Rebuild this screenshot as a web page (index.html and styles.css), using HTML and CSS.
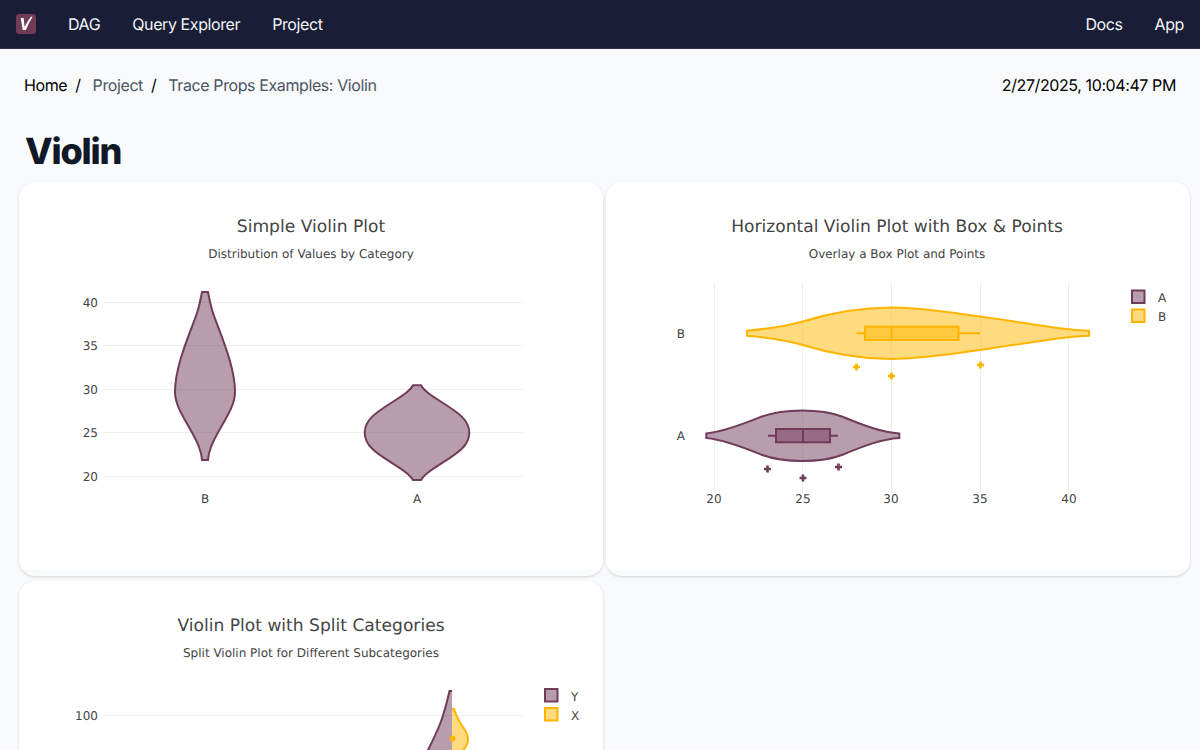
FILE: index.html
```html
<!DOCTYPE html>
<html lang="en">
<head>
<meta charset="utf-8">
<title>Violin</title>
<link rel="stylesheet" href="styles.css">
</head>
<body>
<nav class="nav">
  <svg class="logo" viewBox="0 0 20 20" width="20" height="20" aria-label="Logo"><rect width="20" height="20" rx="3" class="logo-bg"/><path d="M4.7 4H7.6L8.6 13Q11.5 7 14.9 2.7H16.6Q12.5 9 9.8 16H6.8Z" class="logo-v"/></svg>
  <div class="nav-links">
    <a class="nav-link">DAG</a>
    <a class="nav-link">Query Explorer</a>
    <a class="nav-link">Project</a>
  </div>
  <div class="nav-links nav-right">
    <a class="nav-link">Docs</a>
    <a class="nav-link">App</a>
  </div>
</nav>
<main class="main">
  <div class="crumbs">
    <div class="crumb-list">
      <span class="crumb-home">Home</span><span class="sep">/</span>
      <span class="crumb">Project</span><span class="sep">/</span>
      <span class="crumb">Trace Props Examples: Violin</span>
    </div>
    <time class="stamp">2/27/2025, 10:04:47 PM</time>
  </div>
  <h1 class="title">Violin</h1>
  <div class="grid">
    <section class="card">
      <svg class="plot" viewBox="19 182 584 388" width="584" height="388">
        <text x="311" y="232" class="ptitle">Simple Violin Plot</text>
        <text x="311" y="258" class="psub">Distribution of Values by Category</text>
        <g class="grid-lines">
          <path d="M103 302.5H523M103 345.5H523M103 389.5H523M103 432.5H523M103 476.5H523"/>
        </g>
        <g class="tick end">
          <text x="98" y="307">40</text><text x="98" y="350">35</text><text x="98" y="394">30</text><text x="98" y="437">25</text><text x="98" y="481">20</text>
        </g>
        <g class="tick mid">
          <text x="205" y="503">B</text><text x="417" y="503">A</text>
        </g>
        <path class="vio plum" d="M202 292H208C209.5 300 211 307 213 313C219 331 235 365 235 392C235 410 218 428 211 447C209.5 451 208.2 456 208 460H202C201.8 456 200.5 451 199 447C192 428 175 410 175 392C175 365 191 331 197 313C199 307 200.5 300 202 292Z"/>
        <path class="vio plum" d="M413 385.3H421C424 391 432 396 443 403C458 412.5 469.3 420 469.3 432.7C469.3 445.4 458 453 443 462.4C432 469.4 424 474.4 421 480.1H413C410 474.4 402 469.4 391 462.4C376 453 364.7 445.4 364.7 432.7C364.7 420 376 412.5 391 403C402 396 410 391 413 385.3Z"/>
      </svg>
    </section>
    <section class="card">
      <svg class="plot" viewBox="606 182 584 388" width="584" height="388">
        <text x="897" y="232" class="ptitle">Horizontal Violin Plot with Box &amp; Points</text>
        <text x="897" y="258" class="psub">Overlay a Box Plot and Points</text>
        <g class="grid-lines">
          <path d="M714.5 282V493M802.5 282V493M891.5 282V493M980.5 282V493M1068.5 282V493"/>
        </g>
        <g class="tick mid">
          <text x="714" y="503">20</text><text x="803" y="503">25</text><text x="891" y="503">30</text><text x="980" y="503">35</text><text x="1069" y="503">40</text>
        </g>
        <g class="tick end">
          <text x="685" y="338">B</text><text x="685" y="440">A</text>
        </g>
        <path class="vio amber" d="M747 330.7C766 329 784 326.5 802 321.7C830 313 860 307.5 891 307.5C925 307.5 985 317 1032 324.2C1050 327 1070 330.3 1089 330.7V335.7C1070 336.1 1050 339.4 1032 342.2C985 349.4 925 358.9 891 358.9C860 358.9 830 353.4 802 344.7C784 339.9 766 337.4 747 335.7Z"/>
        <path class="whisk amber-s" d="M856.5 333.3H865M958.5 333.3H980"/>
        <rect class="box amber" x="865" y="326.7" width="93.5" height="13.3"/>
        <path class="whisk amber-s" d="M891.5 326.7V340"/>
        <path class="vio plum" d="M706.3 433.4C722 432 740 425.5 761.4 416.7C775 411.5 788.7 410.4 802.3 410.4C815.7 410.4 829 411.5 842.5 416.7C864 425.5 882 432.5 899.3 433.4V438C882 438.9 864 445.9 842.5 454.7C829 459.9 815.7 461 802.3 461C788.7 461 775 459.9 761.4 454.7C740 445.9 722 439.4 706.3 438Z"/>
        <path class="whisk plum-s" d="M768 435.7H776M830 435.7H838"/>
        <rect class="box plum" x="776" y="429" width="54" height="13.3"/>
        <path class="whisk plum-s" d="M803 429V442.3"/>
        <path class="mark amber-s" d="M853 367H860M856.5 363.5V370.5M888 376H895M891.5 372.5V379.5M977 365H984M980.5 361.5V368.5"/>
        <path class="mark plum-s" d="M764 469H771M767.5 465.5V472.5M799.5 478H806.5M803 474.5V481.5M835 467H842M838.5 463.5V470.5"/>
        <rect class="swatch plum" x="1132" y="290.5" width="12.5" height="12.5"/>
        <rect class="swatch amber" x="1132" y="309.5" width="12.5" height="12.5"/>
        <g class="tick">
          <text x="1158" y="302">A</text><text x="1158" y="321">B</text>
        </g>
      </svg>
    </section>
    <section class="card">
      <svg class="plot" viewBox="19 581 584 388" width="584" height="388">
        <text x="311" y="631" class="ptitle">Violin Plot with Split Categories</text>
        <text x="311" y="657" class="psub">Split Violin Plot for Different Subcategories</text>
        <g class="grid-lines"><path d="M103 715.5H523"/></g>
        <g class="tick end"><text x="98" y="720">100</text></g>
        <path class="half plum-f" d="M452 691H449.5C447 702 444 714 440 724C436 734 432 742 428 750L420 790H452Z"/>
        <path class="half-line plum-s" d="M452 691H449.5C447 702 444 714 440 724C436 734 432 742 428 750L420 790"/>
        <path class="half amber-f" d="M452 709H454C456 716 460 723 465 730C469 736 469 741 466 746C460 755 455 770 452 790Z"/>
        <path class="half-line amber-s" d="M452 709H454C456 716 460 723 465 730C469 736 469 741 466 746C460 755 455 770 452 790"/>
        <circle class="dot" cx="452.5" cy="738.5" r="3"/>
        <rect class="swatch plum" x="545" y="689" width="12.5" height="12.5"/>
        <rect class="swatch amber" x="545" y="708" width="12.5" height="12.5"/>
        <g class="tick">
          <text x="571" y="701">Y</text><text x="571" y="720">X</text>
        </g>
      </svg>
    </section>
  </div>
</main>
</body>
</html>
```

FILE: styles.css
```css
* { box-sizing: border-box; }
html, body { margin: 0; height: 100%; overflow: hidden; }
body { background: #f9fafb; font-family: Inter, "Liberation Sans", sans-serif; color: #000; text-rendering: geometricPrecision; }

.nav { display: flex; align-items: center; height: 49px; padding: 0 16px; background: #191e36; border-bottom: 1px solid #2b3047; color: #f3f4f6; font-size: 16px; letter-spacing: -.4px; }
.logo { flex: none; margin-right: 32px; }
.logo-bg { fill: #713b5a; }
.logo-v { fill: #fff; }
.nav-links { display: flex; gap: 32px; }
.nav-right { margin-left: auto; }
.nav-link { line-height: 24px; }

.main { padding: 0 10px 0 19px; }
.crumbs { display: flex; justify-content: space-between; align-items: center; height: 24px; margin-top: 24px; padding: 0 14px 0 5px; font-size: 16px; letter-spacing: -.4px; }
.crumb-list { display: flex; }
.crumb-home { color: #000; }
.crumb { color: #4b5563; }
.sep { margin: 0 12px 0 8px; color: #000; }
.stamp { color: #000; }
.title { margin: 34px 0 0 6px; font-size: 36px; line-height: 40px; font-weight: 800; letter-spacing: -1.2px; color: #111827; height: 51px; }

.grid { display: grid; grid-template-columns: 584px 584px; column-gap: 3px; row-gap: 5px; }
.card { height: 394px; background: #f9fafb; border-radius: 16px; box-shadow: 0 1px 3px rgba(0,0,0,.16); overflow: hidden; }
.plot { display: block; background: #fff; }

.plot text { font-family: "DejaVu Sans", Verdana, sans-serif; fill: #444; }
.ptitle { font-size: 17.1px; text-anchor: middle; }
.psub { font-size: 12px; text-anchor: middle; }
.tick { font-size: 12px; }
.end { text-anchor: end; }
.mid { text-anchor: middle; }
.grid-lines path { stroke: #eee; stroke-width: 1; fill: none; }

.vio, .box, .swatch { stroke-width: 2; stroke-miterlimit: 4; }
.plum { fill: rgba(113,59,90,.5); stroke: #713b5a; }
.amber { fill: rgba(255,183,0,.5); stroke: #ffb400; }
.plum-f { fill: rgba(113,59,90,.5); }
.amber-f { fill: rgba(255,183,0,.5); }
.half-line { stroke-width: 2; fill: none; }
.whisk { stroke-width: 2; fill: none; }
.mark { stroke-width: 2.6; fill: none; }
.plum-s { stroke: #713b5a; }
.amber-s { stroke: #ffb400; }
.dot { fill: #ffb400; }
```
